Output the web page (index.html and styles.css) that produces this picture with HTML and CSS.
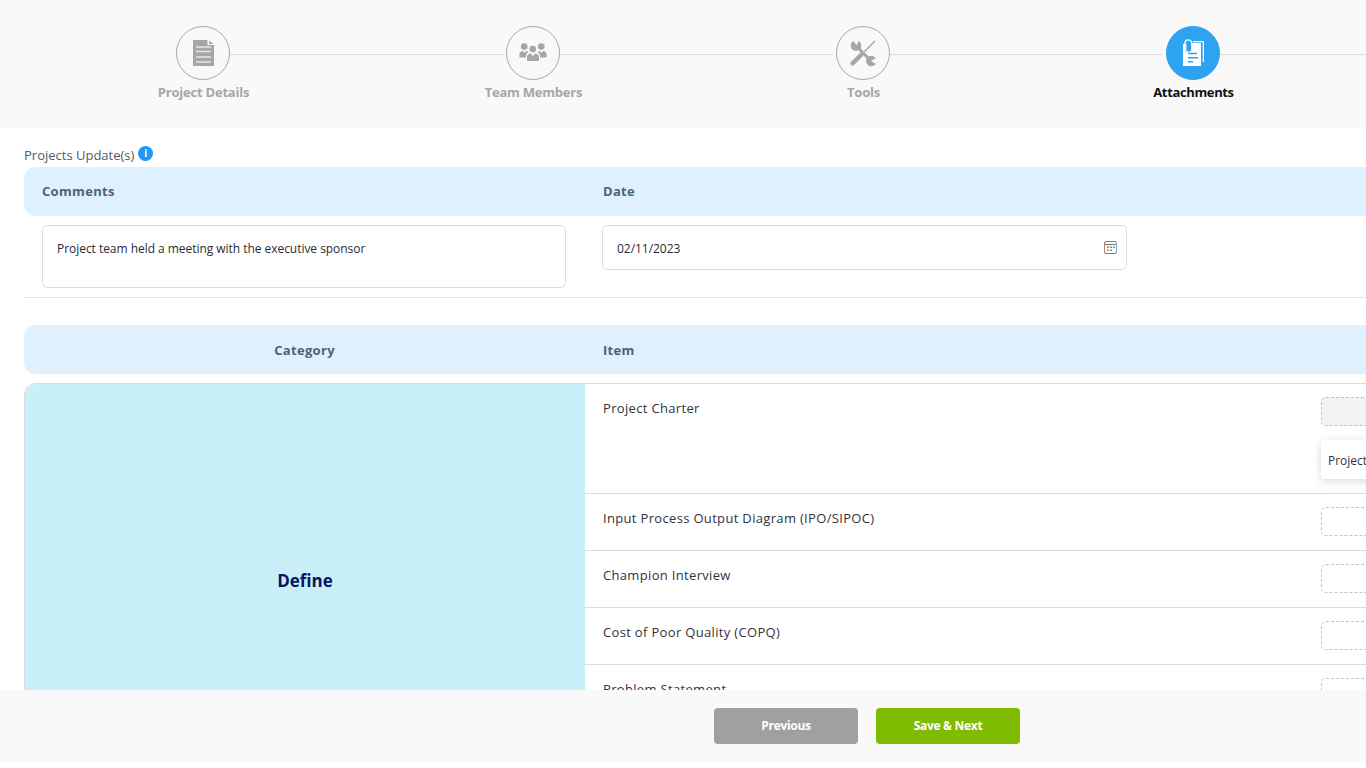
FILE: index.html
```html
<!DOCTYPE html>
<html lang="en">
<head>
<meta charset="utf-8">
<title>Attachments</title>
<link rel="stylesheet" href="styles.css">
</head>
<body>
<header class="stepper">
  <div class="step">
    <div class="circle">
      <svg width="24" height="28" viewBox="0 0 24 28"><path fill="#a6a6a6" d="M2 1h14.500v5H23v21H2z"/><path fill="#a6a6a6" d="M18 1.500 22.500 5H18z"/><path stroke="#e6e6e6" stroke-width="1.300" d="M5 8h15M5 12.500h15M5 18h15M5 23h15"/></svg>
    </div>
    <div class="label">Project Details</div>
  </div>
  <div class="step">
    <div class="circle">
      <svg width="28" height="20" viewBox="0 0 28 20" fill="#a6a6a6"><circle cx="5.200" cy="3.600" r="3.300"/><circle cx="22.300" cy="3.600" r="3.300"/><circle cx="13.800" cy="6" r="3.300"/><path d="M0.500 14.500V11c0-2 2-3 3.500-3l1.500 2L7 8c1 0 2 .4 2.600 1-1.600.8-2.600 2.200-2.600 4v1.500zM27.500 14.500V11c0-2-2-3-3.500-3l-1.500 2L21 8c-1 0-2 .4-2.600 1 1.600.8 2.600 2.200 2.600 4v1.500zM8 18V14c0-2 2-3.500 4-3.500l2 3 2-3c2 0 4 1.500 4 3.500v4z"/></svg>
    </div>
    <div class="label">Team Members</div>
  </div>
  <div class="step">
    <div class="circle">
      <svg width="28" height="28" viewBox="0 0 28 28">
        <path d="M7 6.500 22 22" stroke="#a6a6a6" stroke-width="3"/>
        <circle cx="7" cy="6.500" r="5.300" fill="#a6a6a6"/>
        <circle cx="22.300" cy="22" r="5.300" fill="#a6a6a6"/>
        <path d="M7.500 6.500 3 -1 11 -1z" fill="#f9f9f9"/>
        <path d="M22 22 29 18 29 26z" fill="#f9f9f9"/>
        <path d="M26 2 15 13" stroke="#f9f9f9" stroke-width="3.400"/>
        <path d="M13 15 4 24" stroke="#f9f9f9" stroke-width="6.400"/>
        <path d="M26 2 15 13" stroke="#a6a6a6" stroke-width="1.500"/>
        <path d="M13 15 3.500 24.500" stroke="#a6a6a6" stroke-width="4.400" stroke-linecap="round"/>
      </svg>
    </div>
    <div class="label">Tools</div>
  </div>
  <div class="step step-active">
    <div class="circle">
      <svg width="24" height="28" viewBox="0 0 24 28">
        <path fill="#fff" d="M12 2h11v21h-1.300V3.300H12z"/>
        <path fill="#fff" d="M2 5h2v6c0 4 7 4 7 0V4h9v23H2z"/>
        <path fill="none" stroke="#fff" stroke-width="1.300" d="M3.800 5C3.800 2 5.500 .8 7.300 .8S10.800 2 10.800 5v6c0 3.200-6 3.200-6 0V5"/>
        <path stroke="#2ea3f2" stroke-width="1.400" d="M7 14.500h9M7 18.700h10M7 22.700h5"/>
      </svg>
    </div>
    <div class="label">Attachments</div>
  </div>
</header>

<main class="content">
  <div class="section-title">Projects Update(s) <span class="info">i</span></div>

  <div class="head-row head-row-first">
    <div class="head-cell head-left">Comments</div>
    <div class="head-cell">Date</div>
  </div>
  <div class="update-row">
    <div class="field field-comment">Project team held a meeting with the executive sponsor</div>
    <div class="field field-date">
      <span>02/11/2023</span>
      <svg width="13" height="13" viewBox="0 0 13 13"><rect x="0.500" y="0.500" width="12" height="12" rx="1.500" fill="none" stroke="#7a7a7a"/><path d="M0.500 3.500h12" stroke="#7a7a7a" stroke-width="1.200"/><path d="M0.500 2v9" stroke="#c9805f" stroke-width="1"/><path d="M12.500 2v9" stroke="#6fb4ea" stroke-width="1"/><path d="M3 5.500h2v1.500H3zM6 5.500h2v1.500H6zM9 5.500h2v1.500H9zM3 8.500h2V10H3zM6 8.500h2V10H6z" fill="#8a8a9a"/></svg>
    </div>
  </div>

  <div class="head-row head-row-second">
    <div class="head-cell head-center">Category</div>
    <div class="head-cell">Item</div>
  </div>

  <div class="category-table">
    <div class="category">Define</div>
    <div class="items">
      <div class="item item-tall">
        <div class="item-name">Project Charter</div>
        <div class="upload-col">
          <div class="upload upload-filled"></div>
          <div class="file-card">Project Charter.pdf</div>
        </div>
      </div>
      <div class="item">
        <div class="item-name">Input Process Output Diagram (IPO/SIPOC)</div>
        <div class="upload-col"><div class="upload"></div></div>
      </div>
      <div class="item">
        <div class="item-name">Champion Interview</div>
        <div class="upload-col"><div class="upload"></div></div>
      </div>
      <div class="item">
        <div class="item-name">Cost of Poor Quality (COPQ)</div>
        <div class="upload-col"><div class="upload"></div></div>
      </div>
      <div class="item">
        <div class="item-name">Problem Statement</div>
        <div class="upload-col"><div class="upload"></div></div>
      </div>
    </div>
  </div>
</main>

<footer class="footer">
  <button class="btn btn-prev" type="button">Previous</button>
  <button class="btn btn-next" type="button">Save &amp; Next</button>
</footer>
</body>
</html>
```

FILE: styles.css
```css
* { box-sizing: border-box; }
html, body { height: 768px; overflow: hidden; }
body {
  margin: 0;
  background: #fff;
  font-family: "Open Sans", "Noto Sans", sans-serif;
  font-size: 13px;
  color: #2b2b33;
}

.stepper {
  height: 128px;
  background: #f9f9f9;
  display: flex;
  padding: 26px 0 0 38px;
  width: 1500px;
}
.step {
  flex: none;
  width: 330px;
  display: flex;
  flex-direction: column;
  align-items: center;
  position: relative;
}
.step::after {
  content: "";
  position: absolute;
  left: 192px;
  width: 273px;
  top: 28px;
  border-top: 1px solid #dcdcdc;
}
.circle {
  width: 54px;
  height: 54px;
  border-radius: 50%;
  border: 1px solid #a9a9a9;
  display: flex;
  align-items: center;
  justify-content: center;
  background: #f9f9f9;
}
.label {
  margin: 3px 0 0 1px;
  font-size: 13px;
  line-height: 18px;
  font-weight: 700;
  letter-spacing: -0.22px;
  color: #a6a6a6;
}
.step-active .circle { background: #2ea3f2; border-color: #2ea3f2; }
.step-active .label { color: #111; letter-spacing: -0.36px; }

.content {
  width: 1500px;
  height: 562px;
  padding: 0 0 0 24px;
  overflow: hidden;
}
.section-title {
  height: 39px;
  padding-top: 18px;
  font-size: 13px;
  line-height: 18px;
  color: #555a63;
  display: flex;
  gap: 3px;
}
.info {
  width: 15px;
  height: 15px;
  margin: 0 0 0 1px;
  border-radius: 50%;
  background: #2196f3;
  color: #fff;
  font-size: 10px;
  line-height: 15px;
  font-weight: 700;
  text-align: center;
}

.head-row {
  height: 49px;
  background: #dff0fe;
  border-radius: 12px 0 0 12px;
  display: flex;
  align-items: center;
  font-weight: 700;
  font-size: 13px;
  letter-spacing: 0.32px;
  color: #4f6373;
}
.head-row-first { padding-bottom: 2px; }
.head-cell { flex: 1; }
.head-left { flex: none; width: 579px; padding-left: 18px; }
.head-center { flex: none; width: 561px; text-align: center; margin-right: 18px; }
.head-row-second { margin-top: 27px; }

.update-row {
  height: 82px;
  width: 1342px;
  padding: 9px 0 0 18px;
  border-bottom: 1px solid #e4e4ea;
  display: flex;
  align-items: flex-start;
  gap: 36px;
}
.field {
  border: 1px solid #dcdcdc;
  border-radius: 5px;
  padding: 14px 14px 0;
  font-size: 12px;
  line-height: 18px;
  letter-spacing: -0.04px;
  color: #2b2b33;
}
.field-comment { width: 524px; height: 63px; }
.field-date {
  width: 525px;
  height: 45px;
  padding: 3px 9px 0 14px;
  display: flex;
  align-items: center;
  justify-content: space-between;
}
.field-date svg { margin-top: -3px; }

.category-table {
  margin-top: 9px;
  display: flex;
  height: 394px;
  border-top: 1px solid #dcdcdc;
  border-left: 1px solid #dcdcdc;
  border-radius: 12px 0 0 0;
  overflow: hidden;
}
.category {
  flex: none;
  width: 560px;
  background: #c9f0f8;
  display: flex;
  align-items: center;
  justify-content: center;
  font-size: 17px;
  font-weight: 700;
  color: #0a1464;
}
.items { flex: 1; }
.item {
  height: 57px;
  display: flex;
  justify-content: space-between;
  padding: 14px 0 0 18px;
  border-bottom: 1px solid #dcdcdc;
  font-size: 13px;
  line-height: 20px;
  letter-spacing: 0.33px;
  color: #33333b;
}
.item-tall { height: 110px; }
.upload-col { flex: none; width: 179px; }
.upload {
  height: 29px;
  border: 1px dashed #c4c4c4;
  border-radius: 5px;
  margin-top: -1px;
}
.upload-filled { background: #f3f3f3; }
.file-card {
  margin-top: 14px;
  height: 39px;
  padding: 2px 7px 0;
  border-radius: 4px;
  background: #fff;
  box-shadow: 0 2px 8px rgba(0, 0, 0, 0.16);
  font-size: 12px;
  line-height: 37px;
  letter-spacing: 0;
  white-space: nowrap;
  overflow: hidden;
}

.footer {
  height: 72px;
  background: #f9f9f9;
  display: flex;
  gap: 18px;
  padding: 18px 0 0 714px;
}
.btn {
  width: 144px;
  height: 36px;
  border: 0;
  border-radius: 4px;
  padding: 0 0 2px;
  color: #fff;
  font-family: inherit;
  font-size: 12px;
  font-weight: 700;
  letter-spacing: -0.3px;
}
.btn-prev { background: #a0a0a0; }
.btn-next { background: #7fbc00; }
```
